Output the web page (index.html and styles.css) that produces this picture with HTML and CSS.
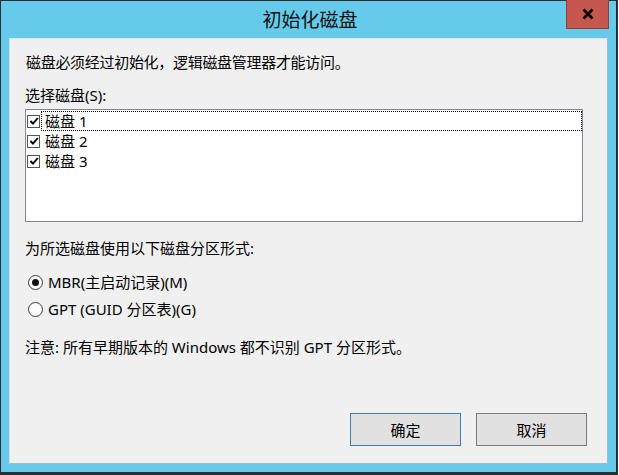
FILE: index.html
```html
<!DOCTYPE html>
<html lang="zh-CN">
<head>
<meta charset="utf-8">
<title>初始化磁盘</title>
<link rel="stylesheet" href="styles.css">
</head>
<body>
<div class="window">
  <div class="titlebar">
    <span class="title">初始化磁盘</span>
    <div class="close">
      <svg width="12" height="12" viewBox="0 0 12 12"><path d="M1.5 1.5 L10.5 10.5 M10.5 1.5 L1.5 10.5" stroke="#000" stroke-width="2.8" fill="none"/></svg>
    </div>
  </div>
  <div class="client">
    <p class="text intro">磁盘必须经过初始化，逻辑磁盘管理器才能访问。</p>
    <p class="text label-disks">选择磁盘(S):</p>
    <div class="listbox">
      <div class="item focused">
        <span class="check"><svg width="10" height="10" viewBox="0 0 10 10"><path d="M1.5 5 L4 7.6 L8.8 2" stroke="#000" stroke-width="1.9" fill="none"/></svg></span>
        <span class="item-text">磁盘 1</span>
      </div>
      <div class="item">
        <span class="check"><svg width="10" height="10" viewBox="0 0 10 10"><path d="M1.5 5 L4 7.6 L8.8 2" stroke="#000" stroke-width="1.9" fill="none"/></svg></span>
        <span class="item-text">磁盘 2</span>
      </div>
      <div class="item">
        <span class="check"><svg width="10" height="10" viewBox="0 0 10 10"><path d="M1.5 5 L4 7.6 L8.8 2" stroke="#000" stroke-width="1.9" fill="none"/></svg></span>
        <span class="item-text">磁盘 3</span>
      </div>
    </div>
    <p class="text label-style">为所选磁盘使用以下磁盘分区形式:</p>
    <div class="radio-row first">
      <span class="radio checked"></span>
      <span class="text">MBR(主启动记录)(M)</span>
    </div>
    <div class="radio-row second">
      <span class="radio"></span>
      <span class="text">GPT (GUID 分区表)(G)</span>
    </div>
    <p class="text note">注意: 所有早期版本的 Windows 都不识别 GPT 分区形式。</p>
    <div class="buttons">
      <button class="btn default">确定</button>
      <button class="btn">取消</button>
    </div>
  </div>
</div>
</body>
</html>
```
FILE: styles.css
```css
* { box-sizing: border-box; }
html, body {
  margin: 0;
  padding: 0;
  background: #ffffff;
}
body {
  width: 619px;
  height: 475px;
  overflow: hidden;
  font-family: "Noto Sans", "Noto Sans CJK SC", sans-serif;
  color: #000;
}
.window {
  width: 618px;
  height: 475px;
  background: #66cbea;
  border-style: solid;
  border-color: #2d2d2d;
  border-width: 1px 2px 3px 1px;
  padding: 0 8px 8px 8px;
  display: flex;
  flex-direction: column;
}
.titlebar {
  height: 37px;
  position: relative;
  display: flex;
  justify-content: center;
  align-items: center;
}
.title {
  font-size: 19px;
  line-height: 24px;
  color: #111;
  margin-left: 3px;
  margin-top: 1px;
}
.close {
  position: absolute;
  right: -1px;
  top: -1px;
  width: 43px;
  height: 29px;
  background: #c6574f;
  border: 1px solid #8c3e38;
  border-top: none;
  display: flex;
  justify-content: center;
  align-items: center;
}
.client {
  height: 426px;
  background: #f0f0f0;
  border: 1px solid;
  border-color: #dbe6ec #9fbccb #9fbccb #cfe0e8;
  display: flex;
  flex-direction: column;
  padding: 13px 0 0 0;
}
.text {
  margin: 0;
  font-size: 15px;
  line-height: 20px;
  white-space: nowrap;
}
.intro { margin-left: 16px; letter-spacing: -0.3px; }
.label-disks { margin-left: 15px; margin-top: 13px; }
.listbox {
  margin-top: 4px;
  margin-left: 15px;
  width: 558px;
  height: 113px;
  background: #fff;
  border: 1px solid #828790;
  padding-top: 1px;
}
.item {
  height: 20px;
  display: flex;
  align-items: center;
}
.check {
  width: 13px;
  height: 13px;
  margin-left: 1px;
  border: 1px solid #555;
  background: #fff;
  display: flex;
  justify-content: center;
  align-items: center;
}
.item-text {
  font-size: 15px;
  line-height: 18px;
  margin-left: 1px;
  padding: 0 0 0 3px;
  flex: 1;
  height: 20px;
  border: 1px dotted transparent;
}
.item.focused .item-text {
  border: 1px dotted #000;
}
.label-style { margin-left: 15px; margin-top: 16px; }
.radio-row {
  height: 20px;
  display: flex;
  align-items: center;
  margin-left: 18px;
}
.radio-row.first { margin-top: 14px; }
.radio-row.second { margin-top: 7px; }
.radio {
  width: 15px;
  height: 15px;
  border-radius: 50%;
  border: 1px solid #3a3a3a;
  background: #fff;
  margin-right: 5px;
  display: flex;
  justify-content: center;
  align-items: center;
}
.radio.checked::after {
  content: "";
  width: 7px;
  height: 7px;
  border-radius: 50%;
  background: #111;
}
.note { margin-left: 15px; margin-top: 18px; }
.buttons {
  margin-top: auto;
  margin-bottom: 17px;
  display: flex;
  justify-content: flex-end;
  gap: 15px;
  padding-right: 20px;
}
.btn {
  width: 111px;
  height: 33px;
  background: #e1e1e1;
  border: 1px solid #7a7a7a;
  font-family: "Noto Sans", "Noto Sans CJK SC", sans-serif;
  font-size: 15px;
  color: #000;
  padding: 0;
}
.btn.default {
  border-color: #3c7fb1;
}
```
